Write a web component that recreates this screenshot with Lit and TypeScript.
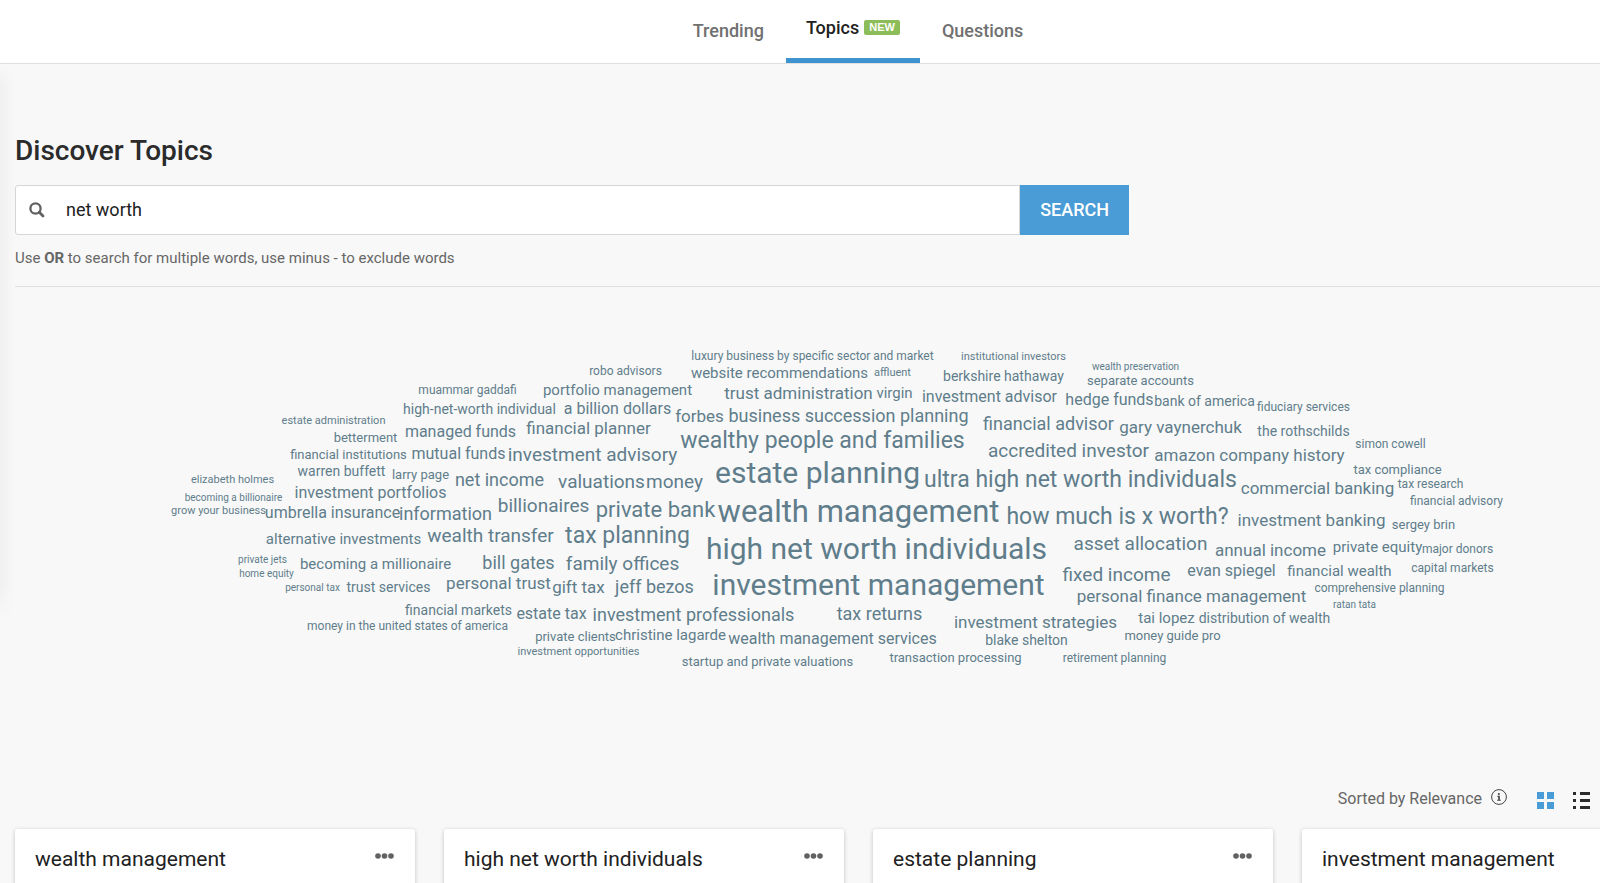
import { LitElement, html, css } from "lit";
import { customElement, state } from "lit/decorators.js";
import { classMap } from "lit/directives/class-map.js";

type Word = [text: string, x: number, y: number, size: number];

// Centre x, baseline y and text size of every topic, measured from the cloud's top centre.
const WORDS: Word[] = [
  ["luxury business by specific sector and market", 5, 74, 12],
  ["institutional investors", 206, 74, 11],
  ["wealth preservation", 328, 84, 10],
  ["robo advisors", -182, 89, 12],
  ["website recommendations", -28, 92, 15],
  ["affluent", 85, 90, 11],
  ["berkshire hathaway", 196, 95, 14],
  ["separate accounts", 333, 99, 13],
  ["muammar gaddafi", -340, 108, 12],
  ["portfolio management", -190, 109, 15],
  ["trust administration", -9, 113, 17],
  ["virgin", 87, 112, 15],
  ["investment advisor", 182, 116, 16],
  ["hedge funds", 302, 119, 16],
  ["bank of america", 397, 120, 14],
  ["fiduciary services", 496, 125, 12],
  ["high-net-worth individual", -328, 128, 14],
  ["a billion dollars", -190, 128, 16],
  ["estate administration", -474, 138, 11],
  ["forbes", -108, 136, 17],
  ["business succession planning", 41, 136, 18],
  ["betterment", -442, 156, 13],
  ["managed funds", -347, 151, 16],
  ["financial planner", -219, 148, 17],
  ["financial advisor", 241, 144, 18],
  ["gary vaynerchuk", 373, 147, 17],
  ["the rothschilds", 496, 150, 14],
  ["simon cowell", 583, 162, 12],
  ["financial institutions", -459, 173, 13],
  ["mutual funds", -349, 173, 16],
  ["investment advisory", -215, 175, 19],
  ["wealthy people and families", 15, 162, 23],
  ["accredited investor", 261, 171, 19],
  ["amazon company history", 442, 175, 17],
  ["warren buffett", -466, 190, 14],
  ["larry page", -387, 193, 13],
  ["net income", -308, 200, 18],
  ["valuations", -206, 202, 19],
  ["money", -133, 202, 19],
  ["estate planning", 10, 197, 30],
  ["ultra high net worth individuals", 273, 201, 23],
  ["tax compliance", 590, 188, 13],
  ["commercial banking", 510, 208, 17],
  ["tax research", 623, 202, 12],
  ["financial advisory", 649, 219, 12],
  ["elizabeth holmes", -575, 197, 11],
  ["becoming a billionaire", -574, 215, 10],
  ["investment portfolios", -437, 212, 16],
  ["grow your business", -589, 228, 11],
  ["umbrella insurance", -475, 232, 16],
  ["information", -362, 234, 18],
  ["billionaires", -264, 226, 19],
  ["private bank", -152, 231, 22],
  ["wealth management", 51, 236, 31],
  ["how much is x worth?", 310, 238, 23],
  ["investment banking", 504, 240, 17],
  ["sergey brin", 616, 243, 13],
  ["alternative investments", -464, 258, 15],
  ["wealth transfer", -317, 256, 19],
  ["tax planning", -180, 257, 23],
  ["high net worth individuals", 69, 273, 30],
  ["asset allocation", 333, 264, 19],
  ["annual income", 463, 270, 17],
  ["private equity", 570, 266, 15],
  ["major donors", 650, 267, 12],
  ["private jets", -545, 277, 10],
  ["home equity", -541, 291, 10],
  ["becoming a millionaire", -432, 283, 15],
  ["bill gates", -289, 283, 18],
  ["family offices", -185, 284, 19],
  ["fixed income", 309, 295, 19],
  ["evan spiegel", 424, 290, 16],
  ["financial wealth", 532, 290, 15],
  ["capital markets", 645, 286, 12],
  ["personal tax", -495, 305, 10],
  ["trust services", -419, 306, 14],
  ["personal trust", -309, 303, 17],
  ["gift tax", -229, 307, 17],
  ["jeff bezos", -153, 307, 18],
  ["investment management", 71, 309, 30],
  ["personal finance management", 384, 316, 17],
  ["comprehensive planning", 572, 306, 12],
  ["ratan tata", 547, 322, 10],
  ["financial markets", -349, 329, 14],
  ["estate tax", -256, 333, 16],
  ["investment professionals", -114, 335, 18],
  ["tax returns", 72, 334, 18],
  ["investment strategies", 228, 342, 17],
  ["tai lopez", 359, 337, 15],
  ["distribution of wealth", 457, 337, 14],
  ["money in the united states of america", -400, 344, 12],
  ["private clients", -232, 355, 13],
  ["christine lagarde", -137, 354, 15],
  ["wealth management services", 25, 358, 16],
  ["blake shelton", 219, 359, 14],
  ["money guide pro", 365, 354, 13],
  ["investment opportunities", -229, 369, 11],
  ["startup and private valuations", -40, 380, 13],
  ["transaction processing", 148, 376, 13],
  ["retirement planning", 307, 376, 12],
];

// Distance from the top of a one-em line box to Roboto's baseline.
const BASELINE = 0.86;

@customElement("word-cloud")
class WordCloud extends LitElement {
  static styles = css`
    :host {
      display: block;
    }
    .cloud {
      position: relative;
      height: 478px;
      margin: 0;
      padding: 0;
      list-style: none;
    }
    .word {
      position: absolute;
      transform: translateX(-50%);
      line-height: 1;
      white-space: nowrap;
    }
    .link {
      color: #607d8b;
      text-decoration: none;
    }
    .link:hover {
      text-decoration: underline;
    }
  `;

  render() {
    return html`<ul class="cloud">
      ${WORDS.map(
        ([text, x, y, size]) => html`<li
          class="word"
          style="left:calc(50% + ${x}px);top:${Math.floor(y - size * BASELINE)}px;font-size:${size}px"
        ><a class="link" href="#">${text}</a></li>`
      )}
    </ul>`;
  }
}

@customElement("topic-card")
class TopicCard extends LitElement {
  static properties = { name: {} };
  declare name: string;

  static styles = css`
    :host {
      display: block;
    }
    .card {
      display: flex;
      justify-content: space-between;
      align-items: flex-start;
      height: 200px;
      padding: 16px 21px 16px 20px;
      box-sizing: border-box;
      background: #fff;
      border-radius: 3px;
      box-shadow: 0 1px 4px rgba(0, 0, 0, 0.22);
    }
    .title {
      margin: 0;
      font-size: 21px;
      line-height: 28px;
      font-weight: 400;
      color: #212121;
    }
    .more {
      display: block;
      padding: 7px 0;
      border: 0;
      background: none;
      color: #616161;
      cursor: pointer;
    }
    .dots {
      display: block;
      fill: currentColor;
    }
  `;

  render() {
    return html`<article class="card">
      <h2 class="title">${this.name}</h2>
      <button class="more" aria-label="More options">
        <svg class="dots" width="19" height="8" viewBox="0 0 19 8">
          <circle cx="3" cy="4" r="2.8" />
          <circle cx="9.5" cy="4" r="2.8" />
          <circle cx="16" cy="4" r="2.8" />
        </svg>
      </button>
    </article>`;
  }
}

@customElement("app-root")
class AppRoot extends LitElement {
  @state() private tab = "Topics";

  static styles = css`
    :host {
      display: block;
      position: relative;
      height: 100vh;
      overflow: hidden;
      background: #f8f8f8;
      color: #666;
      font-family: Roboto, "Liberation Sans", sans-serif;
    }
    .edge {
      position: absolute;
      top: 64px;
      left: 0;
      width: 15px;
      height: 556px;
      background: linear-gradient(to right, rgba(0, 0, 0, 0.03), transparent);
      mask-image: linear-gradient(transparent, #000 24px, #000 520px, transparent);
      pointer-events: none;
    }
    .tabs {
      display: flex;
      justify-content: center;
      gap: 2px;
      height: 63px;
      padding-left: 116px;
      background: #fff;
      border-bottom: 1px solid #e0e0e0;
    }
    .tab {
      display: flex;
      align-items: center;
      gap: 5px;
      box-sizing: border-box;
      height: 63px;
      padding: 0 20px 2px;
      color: #707070;
      font-size: 18px;
      font-weight: 500;
      text-decoration: none;
    }
    .tab.active {
      padding-bottom: 3px;
      border-bottom: 5px solid #3d94d0;
      color: #212121;
    }
    .badge {
      padding: 0 5px;
      border-radius: 2px;
      background: #8dbd58;
      color: #fff;
      font: 700 11px/15px "Liberation Sans", Arial, sans-serif;
    }
    .content {
      padding: 69px 0 0 15px;
    }
    .heading {
      margin: 0 0 16px;
      color: #2b2b2b;
      font-size: 28px;
      line-height: 36px;
      font-weight: 500;
    }
    .search {
      display: flex;
      max-width: 1114px;
      height: 50px;
    }
    .field {
      display: flex;
      flex: 1;
      align-items: center;
      gap: 21px;
      padding-left: 13px;
      background: #fff;
      border: 1px solid #d6d6d6;
      border-radius: 3px 0 0 3px;
    }
    .glass {
      fill: none;
      stroke: #616161;
    }
    .input {
      flex: 1;
      min-width: 0;
      padding: 0;
      border: 0;
      outline: 0;
      background: none;
      color: #212121;
      font: 400 18px/24px Roboto, sans-serif;
    }
    .submit {
      padding: 0 20px;
      border: 0;
      background: #499cd6;
      color: #fff;
      font: 500 18px/24px Roboto, sans-serif;
      cursor: pointer;
    }
    .hint {
      margin: 0;
      padding: 13px 0 18px;
      border-bottom: 1px solid #e0e0e0;
      font-size: 15px;
      line-height: 20px;
    }
    .bar {
      display: flex;
      justify-content: flex-end;
      align-items: center;
      height: 24px;
      margin-top: 22px;
      padding-right: 10px;
    }
    .sorted {
      margin-right: 9px;
      font-size: 16px;
      line-height: 24px;
    }
    .icon {
      display: block;
      padding: 0;
      border: 0;
      background: none;
      cursor: pointer;
    }
    .icon svg {
      display: block;
      fill: currentColor;
    }
    .info {
      margin-bottom: 4px;
      color: #424242;
    }
    .grid-view {
      margin: 3px 19px 0 30px;
      color: #499cd6;
    }
    .list-view {
      margin-top: 3px;
      color: #2b2b2b;
    }
    .cards {
      display: flex;
      gap: 29px;
      margin-top: 18px;
    }
    .cell {
      flex: 0 0 25vw;
    }
  `;

  private renderTab(name: string, badge = "") {
    return html`<a
      href="#"
      class=${classMap({ tab: true, active: this.tab === name })}
      @click=${() => (this.tab = name)}
      >${name}${badge ? html`<span class="badge">${badge}</span>` : ""}</a
    >`;
  }

  render() {
    return html`
      <nav class="tabs">
        ${this.renderTab("Trending")}${this.renderTab("Topics", "NEW")}${this.renderTab("Questions")}
      </nav>
      <div class="edge"></div>
      <main class="content">
        <h1 class="heading">Discover Topics</h1>
        <form class="search" @submit=${(e: Event) => e.preventDefault()}>
          <label class="field">
            <svg class="glass" width="16" height="16" viewBox="0 0 16 16" role="img" aria-label="Search topics">
              <circle cx="6.5" cy="6.5" r="5.1" stroke-width="2.3" />
              <path d="M10.3 10.3 14 14" stroke-width="2.8" stroke-linecap="round" />
            </svg>
            <input class="input" type="text" .value=${"net worth"} />
          </label>
          <button class="submit">SEARCH</button>
        </form>
        <p class="hint">Use <b>OR</b> to search for multiple words, use minus - to exclude words</p>
        <word-cloud></word-cloud>
        <div class="bar">
          <span class="sorted">Sorted by Relevance</span>
          <button class="icon info" aria-label="About sorting">
            <svg width="16" height="16" viewBox="0 0 16 16">
              <circle cx="8" cy="8" r="7.4" fill="none" stroke="currentColor" stroke-width="1" />
              <circle cx="7.9" cy="4.9" r="1" />
              <path d="M6.3 6.8h2.5v4h1v.9H6.2v-.9h1V7.7h-.9z" />
            </svg>
          </button>
          <button class="icon grid-view" aria-label="Grid view">
            <svg width="17" height="17" viewBox="0 0 17 17">
              <path d="M0 0h7v7H0zM10 0h7v7h-7zM0 10h7v7H0zM10 10h7v7h-7z" />
            </svg>
          </button>
          <button class="icon list-view" aria-label="List view">
            <svg width="17" height="17" viewBox="0 0 17 17">
              <path d="M0 0h3v3H0zM7 0h10v3H7zM0 7h3v3H0zM7 7h10v3H7zM0 14h3v3H0zM7 14h10v3H7z" />
            </svg>
          </button>
        </div>
        <section class="cards">
          ${["wealth management", "high net worth individuals", "estate planning", "investment management"].map(
            (name) => html`<topic-card class="cell" .name=${name}></topic-card>`
          )}
        </section>
      </main>
    `;
  }
}
